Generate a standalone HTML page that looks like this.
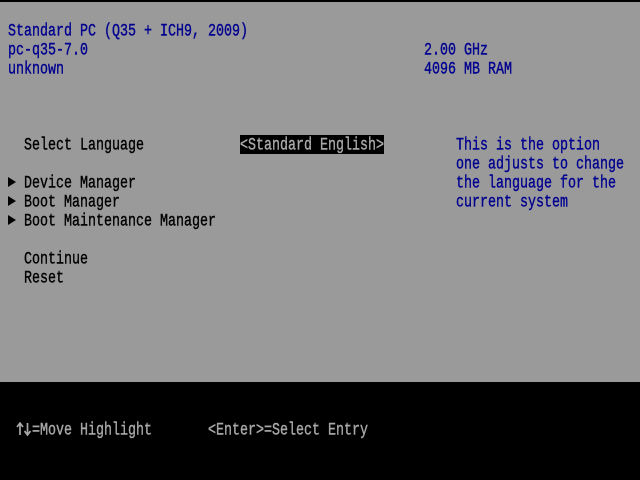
<!DOCTYPE html>
<html>
<head>
<meta charset="utf-8">
<style>
html,body{margin:0;padding:0;width:640px;height:480px;overflow:hidden;background:#000}
#g{position:absolute;left:0;top:2px;width:640px;height:380px;background:#9a9a9a}
.t{position:absolute;height:19px;line-height:19px;font-family:"Liberation Mono","DejaVu Sans Mono",monospace;font-size:13.333px;white-space:pre;transform:translateY(0.5px) scaleY(1.35);transform-origin:0 50%;letter-spacing:0;margin-top:1px;-webkit-text-stroke:0.3px currentColor}
.b{color:#000090}
.k{color:#000}
.w{color:#a8a8a8}
#h{position:absolute;left:240px;top:135px;width:144px;height:19px;background:#000}
.a{position:absolute;left:8px;width:0;height:0;border-left:8px solid #000;border-top:5px solid transparent;border-bottom:5px solid transparent}
</style>
</head>
<body>
<div id="g"></div>
<div class="t b" style="left:8px;top:21px">Standard PC (Q35 + ICH9, 2009)</div>
<div class="t b" style="left:8px;top:40px">pc-q35-7.0</div>
<div class="t b" style="left:8px;top:59px">unknown</div>
<div class="t b" style="left:424px;top:40px">2.00 GHz</div>
<div class="t b" style="left:424px;top:59px">4096 MB RAM</div>
<div class="t k" style="left:24px;top:135px">Select Language</div>
<div id="h"></div>
<div class="t w" style="left:240px;top:135px">&lt;Standard English&gt;</div>
<div class="t b" style="left:456px;top:135px">This is the option</div>
<div class="t b" style="left:456px;top:154px">one adjusts to change</div>
<div class="t b" style="left:456px;top:173px">the language for the</div>
<div class="t b" style="left:456px;top:192px">current system</div>
<div class="a" style="top:177px"></div>
<div class="a" style="top:196px"></div>
<div class="a" style="top:215px"></div>
<div class="t k" style="left:24px;top:173px">Device Manager</div>
<div class="t k" style="left:24px;top:192px">Boot Manager</div>
<div class="t k" style="left:24px;top:211px">Boot Maintenance Manager</div>
<div class="t k" style="left:24px;top:249px">Continue</div>
<div class="t k" style="left:24px;top:268px">Reset</div>
<svg style="position:absolute;left:16px;top:422px" width="16" height="14" viewBox="0 0 16 14"><path d="M4 13V1.500M1 5L4 1L7 5M11.500 1V12.500M8.500 9L11.500 13L14.500 9" fill="none" stroke="#a8a8a8" stroke-width="1.700"/></svg>
<div class="t w" style="left:32px;top:420px">=Move Highlight</div>
<div class="t w" style="left:208px;top:420px">&lt;Enter&gt;=Select Entry</div>
</body>
</html>
